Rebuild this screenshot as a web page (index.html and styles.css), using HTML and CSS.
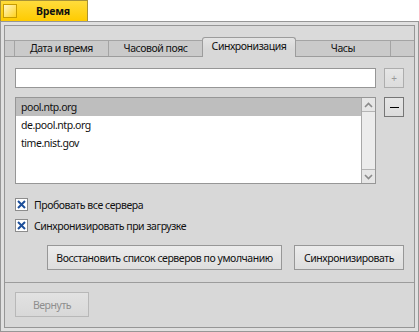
FILE: index.html
```html
<!DOCTYPE html>
<html lang="ru">
<head>
    <meta charset="UTF-8">
    <title>Время</title>
    <link rel="stylesheet" href="styles.css">
</head>
<body>
    <div class="title-tab">
        <span class="close-btn"></span>
        <span class="title">Время</span>
    </div>

    <div class="window">
        <div class="frame">
            <div class="tabs">
                <div class="tab-stub"></div>
                <div class="tab">Дата и время</div>
                <div class="tab">Часовой пояс</div>
                <div class="tab tab-active">Синхронизация</div>
                <div class="tab tab-after">Часы</div>
                <div class="tab-fill"></div>
            </div>

            <div class="tab-body">
                <div class="server-row">
                    <input type="text" class="text-field">
                    <button class="small-btn" disabled>+</button>
                </div>

                <div class="list-row">
                    <div class="server-list">
                        <div class="list-items">
                            <div class="list-item selected">pool.ntp.org</div>
                            <div class="list-item">de.pool.ntp.org</div>
                            <div class="list-item">time.nist.gov</div>
                        </div>
                        <div class="scrollbar">
                            <div class="scroll-arrow">
                                <svg width="9" height="6" viewBox="0 0 9 6"><polyline points="1,5 4.5,1.5 8,5" fill="none" stroke="#8a8a8a" stroke-width="1.6"/></svg>
                            </div>
                            <div class="scroll-track"></div>
                            <div class="scroll-arrow">
                                <svg width="9" height="6" viewBox="0 0 9 6"><polyline points="1,1 4.5,4.5 8,1" fill="none" stroke="#8a8a8a" stroke-width="1.6"/></svg>
                            </div>
                        </div>
                    </div>
                    <button class="small-btn minus-btn"><span class="minus"></span></button>
                </div>

                <div class="checks">
                    <label class="check-row">
                        <span class="check-box">
                            <svg width="11" height="11" viewBox="0 0 11 11"><path d="M2 2 L9 9 M9 2 L2 9" stroke="#1d4f9a" stroke-width="2"/></svg>
                        </span>
                        Пробовать все сервера
                    </label>
                    <label class="check-row">
                        <span class="check-box">
                            <svg width="11" height="11" viewBox="0 0 11 11"><path d="M2 2 L9 9 M9 2 L2 9" stroke="#1d4f9a" stroke-width="2"/></svg>
                        </span>
                        Синхронизировать при загрузке
                    </label>
                </div>

                <div class="actions">
                    <button class="btn btn-restore">Восстановить список серверов по умолчанию</button>
                    <button class="btn btn-sync">Синхронизировать</button>
                </div>
            </div>

            <div class="footer">
                <button class="btn btn-revert" disabled>Вернуть</button>
            </div>
        </div>
    </div>
</body>
</html>
```

FILE: styles.css
```css
* {
    margin: 0;
    padding: 0;
    box-sizing: border-box;
}

body {
    font-family: 'Noto Sans', 'DejaVu Sans', sans-serif;
    font-size: 10.5px;
    letter-spacing: -0.45px;
    color: #111;
    background: #fff;
    width: 419px;
    height: 332px;
    overflow: hidden;
}

/* window tab */

.title-tab {
    width: 88px;
    height: 21px;
    background: linear-gradient(#ffdc3c, #ffcb00);
    border: 1px solid #a89236;
    border-bottom: none;
    display: flex;
    align-items: center;
}

.close-btn {
    width: 14px;
    height: 14px;
    margin-left: 2px;
    border: 1px solid #c79c00;
    background: linear-gradient(135deg, #fff6c8 0%, #ffd21c 100%);
}

.title {
    margin-left: 19px;
    font-weight: bold;
    letter-spacing: -0.2px;
}

/* window frame */

.window {
    height: 311px;
    border: 1px solid #969696;
    padding: 3px;
    background: #e0e0e0;
}

.frame {
    height: 100%;
    border: 1px solid #969696;
    background: #d8d8d8;
    display: flex;
    flex-direction: column;
}

/* tabs */

.tabs {
    height: 31px;
    display: flex;
    align-items: flex-end;
    border-bottom: 1px solid #9c9c9c;
    background: #dadada;
}

.tab-stub,
.tab,
.tab-fill {
    height: 16px;
    background: #cacaca;
    border-top: 1px solid #a4a4a4;
}

.tab-stub {
    width: 9px;
}

.tab-fill {
    flex: 1;
    border-left: 1px solid #a4a4a4;
}

.tab {
    width: 94px;
    border-left: 1px solid #a4a4a4;
    text-align: center;
    line-height: 15px;
    white-space: nowrap;
}

.tab-after {
    border-left: none;
}

.tab-active {
    height: 20px;
    margin-bottom: -1px;
    background: linear-gradient(#e4e4e4, #d8d8d8 60%);
    border: 1px solid #9c9c9c;
    border-bottom: none;
    border-radius: 3px 3px 0 0;
    line-height: 16px;
}

/* tab content */

.tab-body {
    height: 226px;
    padding: 11px 10px 0;
    border-bottom: 1px solid #9c9c9c;
    display: flex;
    flex-direction: column;
}

.server-row,
.list-row {
    display: flex;
    gap: 8px;
}

.text-field {
    flex: 1;
    height: 20px;
    border: 1px solid #969696;
    background: #fff;
    font: inherit;
}

.small-btn {
    width: 20px;
    height: 20px;
    border: 1px solid #adadad;
    background: linear-gradient(#e6e6e6, #dcdcdc);
    font-family: inherit;
    font-size: 10px;
    color: #9a9a9a;
    line-height: 16px;
}

.minus-btn {
    border-color: #767676;
    display: flex;
    align-items: center;
    justify-content: center;
}

.minus {
    width: 9px;
    height: 1px;
    background: #000;
}

.list-row {
    margin-top: 9px;
}

.server-list {
    flex: 1;
    height: 87px;
    border: 1px solid #969696;
    background: #fff;
    display: flex;
}

.list-items {
    flex: 1;
}

.list-item {
    height: 18px;
    line-height: 19px;
    padding-left: 5px;
}

.list-item.selected {
    background: #bebebe;
}

.scrollbar {
    width: 14px;
    border-left: 1px solid #a8a8a8;
    background: #ececec;
    display: flex;
    flex-direction: column;
}

.scroll-arrow {
    height: 14px;
    background: #e6e6e6;
    display: flex;
    align-items: center;
    justify-content: center;
}

.scroll-arrow:first-child {
    border-bottom: 1px solid #b4b4b4;
}

.scroll-arrow:last-child {
    border-top: 1px solid #b4b4b4;
}

.scroll-track {
    flex: 1;
}

/* checkboxes */

.checks {
    margin-top: 14px;
    display: flex;
    flex-direction: column;
    gap: 8px;
}

.check-row {
    height: 13px;
    display: flex;
    align-items: center;
    gap: 6px;
}

.check-box {
    width: 13px;
    height: 13px;
    border: 1px solid #8c8c8c;
    background: #fff;
    display: flex;
    align-items: center;
    justify-content: center;
}

/* buttons */

.actions {
    margin-top: 13px;
    display: flex;
    justify-content: flex-end;
    gap: 12px;
}

.btn {
    height: 25px;
    border: 1px solid #979797;
    background: linear-gradient(#ececec, #dedede);
    font: inherit;
    letter-spacing: inherit;
    color: #111;
    text-align: center;
    white-space: nowrap;
}

.btn-restore {
    width: 235px;
}

.btn-sync {
    width: 110px;
}

.footer {
    flex: 1;
    padding: 9px 10px;
}

.btn-revert {
    width: 74px;
    height: 25px;
    border-color: #b8b8b8;
    background: linear-gradient(#e2e2e2, #d8d8d8);
    color: #8e8e8e;
}
```
